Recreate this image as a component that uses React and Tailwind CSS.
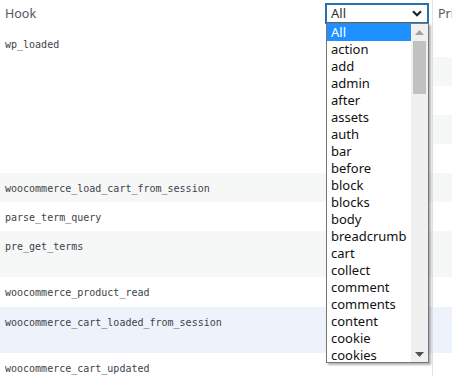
import React from "react";

const options = [
  "All",
  "action",
  "add",
  "admin",
  "after",
  "assets",
  "auth",
  "bar",
  "before",
  "block",
  "blocks",
  "body",
  "breadcrumb",
  "cart",
  "collect",
  "comment",
  "comments",
  "content",
  "cookie",
  "cookies",
];

const rows = [
  { hook: "woocommerce_load_cart_from_session", bg: "bg-[#f6f7f7]", h: "h-[29px]" },
  { hook: "parse_term_query", bg: "bg-white", h: "h-[29px]" },
  { hook: "pre_get_terms", bg: "bg-[#f6f7f7]", h: "h-[46px]" },
  { hook: "woocommerce_product_read", bg: "bg-white", h: "h-[30px]" },
  { hook: "woocommerce_cart_loaded_from_session", bg: "bg-[#eef2fa]", h: "h-[46px]" },
  { hook: "woocommerce_cart_updated", bg: "bg-white", h: "h-[40px]" },
];

const subRows = ["bg-white", "bg-[#f6f7f7]", "bg-white", "bg-[#f6f7f7]", "bg-white"];

const HookFilter = () => {
  return (
    <div className="relative">
      <div className="w-[104px] h-[21px] border-2 border-[#2271b1] bg-white flex items-center justify-between pl-[4px] pr-[5px]">
        <span className="text-[13px] text-[#2c3338] leading-none">All</span>
        <svg width="10" height="7" viewBox="0 0 10 7">
          <path d="M1 1.2 L5 5.2 L9 1.2" fill="none" stroke="#1d2327" strokeWidth="2.2" />
        </svg>
      </div>
      {/* open dropdown list */}
      <div className="absolute left-[1px] top-[20px] w-[103px] h-[340px] border border-[#767676] bg-white shadow-[2px_2px_2px_rgba(0,0,0,0.3)] overflow-hidden flex z-10">
        <div className="flex-1 flex flex-col">
          {options.map((opt, i) => (
            <div
              key={opt}
              className={
                i === 0
                  ? "h-[17px] shrink-0 bg-[#1e90ff] text-white text-[13px] leading-[16px] pl-[4px]"
                  : "h-[17px] shrink-0 text-[#111] text-[13px] leading-[16px] pl-[4px]"
              }
            >
              {opt}
            </div>
          ))}
        </div>
        <div className="w-[17px] bg-[#f0f0f0] flex flex-col items-center">
          <svg className="mt-[6px]" width="9" height="5" viewBox="0 0 9 5">
            <path d="M0 5 L4.5 0 L9 5 Z" fill="#a3a3a3" />
          </svg>
          <div className="mt-[6px] w-[13px] h-[53px] bg-[#c1c1c1]" />
          <div className="flex-1" />
          <svg className="mb-[5px]" width="9" height="5" viewBox="0 0 9 5">
            <path d="M0 0 L9 0 L4.5 5 Z" fill="#505050" />
          </svg>
        </div>
      </div>
    </div>
  );
};

const App = () => {
  return (
    <div className="w-[452px] h-[376px] overflow-hidden bg-white font-['Noto_Sans',sans-serif]">
      <div className="w-[600px]">
        {/* header */}
        <div className="flex h-[28px]">
          <div className="w-[432px] flex items-center justify-between pl-[5px] pr-[3px]">
            <span className="text-[12.5px] text-[#50575e]">Hook</span>
            <div className="self-start mt-[3px]">
              <HookFilter />
            </div>
          </div>
          <div className="flex-1 border-l border-[#e2e4e7] flex items-center pl-[5px]">
            <span className="text-[12.5px] text-[#50575e] whitespace-nowrap">Priority</span>
          </div>
        </div>

        {/* wp_loaded spans several callbacks */}
        <div className="flex">
          <div className="w-[432px] bg-white pl-[5px] pt-[9px] font-['DejaVu_Sans_Mono',monospace] text-[10px] leading-4 text-[#3c434a]">
            wp_loaded
          </div>
          <div className="flex-1 border-l border-[#e2e4e7] flex flex-col">
            {subRows.map((bg, i) => (
              <div key={i} className={`${bg} h-[29px]`} />
            ))}
          </div>
        </div>

        {rows.map((row) => (
          <div key={row.hook} className={`flex ${row.bg} ${row.h}`}>
            <div className="w-[432px] pl-[5px] pt-2 font-['DejaVu_Sans_Mono',monospace] text-[10px] leading-4 text-[#3c434a]">
              {row.hook}
            </div>
            <div className="flex-1 border-l border-[#e2e4e7]" />
          </div>
        ))}
      </div>
    </div>
  );
};

export default App;
